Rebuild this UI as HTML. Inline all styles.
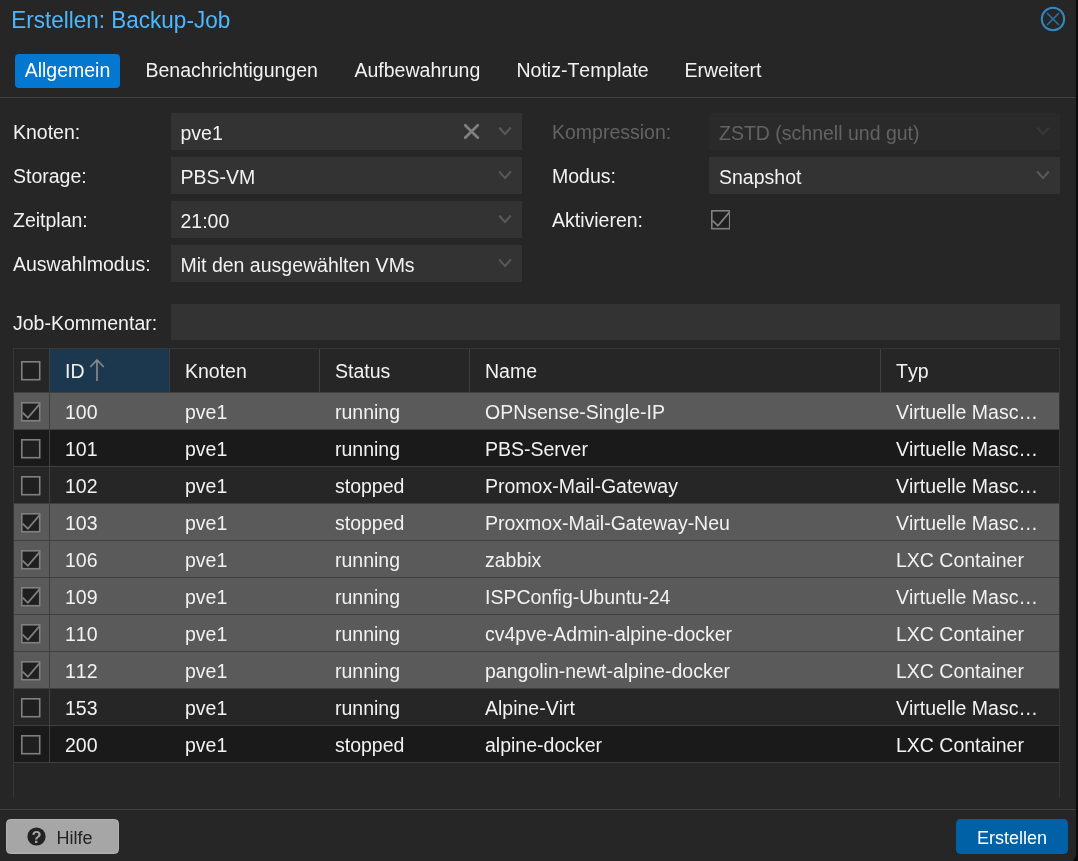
<!DOCTYPE html>
<html lang="de">
<head>
<meta charset="utf-8">
<title>Erstellen: Backup-Job</title>
<style>
*{box-sizing:border-box;margin:0;padding:0}
html,body{width:1078px;height:861px;overflow:hidden;background:#0b0b0b}
body{font-family:"Liberation Sans",Arial,sans-serif;font-size:19.5px;color:#f2f2f2;position:relative;font-kerning:none}
#win{will-change:transform;position:absolute;left:0;top:0;width:1076px;height:863px;background:#262626;border-bottom-right-radius:9px}
.abs{position:absolute;white-space:nowrap}
#title{left:11.3px;top:8.4px;font-size:22.5px;line-height:26px;color:#4db8ff;transform:scaleY(1.08);transform-origin:0 100%}
#close{left:1040px;top:6px;width:26px;height:26px}
.tab{top:54px;height:34px;line-height:32px;font-size:19.5px;color:#f2f2f2}
#tab0{left:15px;width:105px;background:#0477d1;border-radius:4px;text-align:center;color:#fff}
#tabline{left:0;top:97px;width:1075px;height:1px;background:#404040}
.lbl{left:13px;height:36px;line-height:38px}
.fld{background:#333;height:37px;line-height:37px;padding-left:9.5px;padding-top:2px;color:#f2f2f2;overflow:hidden}
.fld.r{padding-left:10px}
.dis{color:#636363}
.chev{position:absolute;right:9.4px;top:12.3px;width:16px;height:12px}
.clr{position:absolute;left:292px;top:10px;width:17px;height:17px}
.cbx{position:absolute;width:19.5px;height:19.5px;display:block}
#grid{left:13px;top:348px;width:1047px;height:449px;border:1px solid #363636;border-bottom:none}
.hd{position:absolute;top:0;height:43px;line-height:45px;border-right:1px solid #404040;padding-left:15px;background:#262626}
.hd.sorted{background:#1c384e}
.hdline{position:absolute;left:0;top:43px;width:1045px;height:1px;background:#404040}
.sort{display:inline-block;width:16px;height:24px;vertical-align:-4px;margin-left:4.5px}
.row{position:absolute;left:0;width:1045px;height:37px;line-height:38px;border-bottom:1px solid #404040}
.row.alt{background:#1a1a1a}
.row.sel{background:#5a5a5a}
.row span{position:absolute;top:0;white-space:nowrap;overflow:hidden;text-overflow:ellipsis}
.row .c0{left:0;width:36px;height:36px;border-right:1px solid #404040}
.c1{left:51px}.c2{left:171px}.c3{left:321px}.c4{left:471px}.c5{left:882px;width:148px}
#botline{left:0;top:809px;width:1075px;height:1px;background:#404040}
.btn{top:819px;height:35px;font-size:18px;line-height:38px;border-radius:4.5px;text-align:center}
#help{left:6px;width:113px;background:#a6a6a6;color:#222;border:1px solid #b2b2b2;line-height:36px;text-align:left;padding-left:49.5px}
#help svg{position:absolute;left:20.4px;top:7.1px;width:19px;height:19px}
#create{left:956px;width:112px;background:#0061a7;color:#fff}
</style>
</head>
<body>
<div id="win">
<div id="title" class="abs">Erstellen: Backup-Job</div>
<svg id="close" class="abs" viewBox="0 0 26 26"><circle cx="13" cy="13" r="11.2" fill="none" stroke="#3687bf" stroke-width="2"/><path d="M7 7L19 19M19 7L7 19" stroke="#2b6ea2" stroke-width="1.7" fill="none"/></svg>

<div id="tab0" class="abs tab">Allgemein</div>
<div class="abs tab" style="left:145.5px">Benachrichtigungen</div>
<div class="abs tab" style="left:354.5px">Aufbewahrung</div>
<div class="abs tab" style="left:516.5px">Notiz-Template</div>
<div class="abs tab" style="left:684.5px">Erweitert</div>
<div id="tabline" class="abs"></div>

<div class="abs lbl" style="top:113px">Knoten:</div>
<div class="abs fld" style="left:171px;top:113px;width:351px">pve1<svg class="clr" viewBox="0 0 17 17"><path d="M2.2 2.2L14.8 14.8M14.8 2.2L2.2 14.8" fill="none" stroke="#808080" stroke-width="2.7" stroke-linecap="round"/></svg><svg class="chev" viewBox="0 0 16 12"><path d="M2.2 2.5L8 9.1L13.8 2.5" fill="none" stroke="#5a5a5a" stroke-width="2"/></svg></div>
<div class="abs lbl" style="top:157px">Storage:</div>
<div class="abs fld" style="left:171px;top:157px;width:351px">PBS-VM<svg class="chev" viewBox="0 0 16 12"><path d="M2.2 2.5L8 9.1L13.8 2.5" fill="none" stroke="#5a5a5a" stroke-width="2"/></svg></div>
<div class="abs lbl" style="top:201px">Zeitplan:</div>
<div class="abs fld" style="left:171px;top:201px;width:351px">21:00<svg class="chev" viewBox="0 0 16 12"><path d="M2.2 2.5L8 9.1L13.8 2.5" fill="none" stroke="#5a5a5a" stroke-width="2"/></svg></div>
<div class="abs lbl" style="top:245px">Auswahlmodus:</div>
<div class="abs fld" style="left:171px;top:245px;width:351px">Mit den ausgewählten VMs<svg class="chev" viewBox="0 0 16 12"><path d="M2.2 2.5L8 9.1L13.8 2.5" fill="none" stroke="#5a5a5a" stroke-width="2"/></svg></div>

<div class="abs lbl dis" style="left:552px;top:113px">Kompression:</div>
<div class="abs fld r dis" style="left:709px;top:113px;width:351px;background:#2a2a2a">ZSTD (schnell und gut)<svg class="chev" viewBox="0 0 16 12"><path d="M2.2 2.5L8 9.1L13.8 2.5" fill="none" stroke="#383838" stroke-width="2"/></svg></div>
<div class="abs lbl" style="left:552px;top:157px">Modus:</div>
<div class="abs fld r" style="left:709px;top:157px;width:351px">Snapshot<svg class="chev" viewBox="0 0 16 12"><path d="M2.2 2.5L8 9.1L13.8 2.5" fill="none" stroke="#5a5a5a" stroke-width="2"/></svg></div>
<div class="abs lbl" style="left:552px;top:201px">Aktivieren:</div>
<svg class="cbx" style="left:710.5px;top:210px" viewBox="0 0 19.5 19.5"><rect x="0.8" y="0.8" width="17.9" height="17.9" fill="#1f1f1f" stroke="#808080" stroke-width="1.6"/><path d="M1.6 10.6L6.9 15.8L18.8 1.9" fill="none" stroke="#808080" stroke-width="1.8"/></svg>

<div class="abs lbl" style="top:304px">Job-Kommentar:</div>
<div class="abs fld" style="left:171px;top:304px;width:889px;height:36px"></div>

<div id="grid" class="abs">
<div class="hd" style="left:0;width:36px;padding:0"><svg class="cbx" style="left:7.2px;top:12.3px" viewBox="0 0 19.5 19.5"><rect x="0.8" y="0.8" width="17.9" height="17.9" fill="#1f1f1f" stroke="#808080" stroke-width="1.6"/></svg></div>
<div class="hd sorted" style="left:36px;width:120px">ID<svg class="sort" viewBox="0 0 16 24"><path d="M8 1.6V23M1.2 9L8 2L14.8 9" fill="none" stroke="#888" stroke-width="1.7"/></svg></div>
<div class="hd" style="left:156px;width:150px">Knoten</div>
<div class="hd" style="left:306px;width:150px">Status</div>
<div class="hd" style="left:456px;width:411px">Name</div>
<div class="hd" style="left:867px;width:178px;border-right:none">Typ</div>
<div class="hdline"></div>
<div class="row sel" style="top:44px"><span class="c0"><svg class="cbx" style="left:7.2px;top:9.4px" viewBox="0 0 19.5 19.5"><rect x="0.8" y="0.8" width="17.9" height="17.9" fill="#1f1f1f" stroke="#808080" stroke-width="1.6"/><path d="M1.6 10.6L6.9 15.8L18.8 1.9" fill="none" stroke="#808080" stroke-width="1.8"/></svg></span><span class="c1">100</span><span class="c2">pve1</span><span class="c3">running</span><span class="c4">OPNsense-Single-IP</span><span class="c5">Virtuelle Maschine</span></div>
<div class="row alt" style="top:81px"><span class="c0"><svg class="cbx" style="left:7.2px;top:9.4px" viewBox="0 0 19.5 19.5"><rect x="0.8" y="0.8" width="17.9" height="17.9" fill="#1f1f1f" stroke="#808080" stroke-width="1.6"/></svg></span><span class="c1">101</span><span class="c2">pve1</span><span class="c3">running</span><span class="c4">PBS-Server</span><span class="c5">Virtuelle Maschine</span></div>
<div class="row" style="top:118px"><span class="c0"><svg class="cbx" style="left:7.2px;top:9.4px" viewBox="0 0 19.5 19.5"><rect x="0.8" y="0.8" width="17.9" height="17.9" fill="#1f1f1f" stroke="#808080" stroke-width="1.6"/></svg></span><span class="c1">102</span><span class="c2">pve1</span><span class="c3">stopped</span><span class="c4">Promox-Mail-Gateway</span><span class="c5">Virtuelle Maschine</span></div>
<div class="row sel" style="top:155px"><span class="c0"><svg class="cbx" style="left:7.2px;top:9.4px" viewBox="0 0 19.5 19.5"><rect x="0.8" y="0.8" width="17.9" height="17.9" fill="#1f1f1f" stroke="#808080" stroke-width="1.6"/><path d="M1.6 10.6L6.9 15.8L18.8 1.9" fill="none" stroke="#808080" stroke-width="1.8"/></svg></span><span class="c1">103</span><span class="c2">pve1</span><span class="c3">stopped</span><span class="c4">Proxmox-Mail-Gateway-Neu</span><span class="c5">Virtuelle Maschine</span></div>
<div class="row sel" style="top:192px"><span class="c0"><svg class="cbx" style="left:7.2px;top:9.4px" viewBox="0 0 19.5 19.5"><rect x="0.8" y="0.8" width="17.9" height="17.9" fill="#1f1f1f" stroke="#808080" stroke-width="1.6"/><path d="M1.6 10.6L6.9 15.8L18.8 1.9" fill="none" stroke="#808080" stroke-width="1.8"/></svg></span><span class="c1">106</span><span class="c2">pve1</span><span class="c3">running</span><span class="c4">zabbix</span><span class="c5">LXC Container</span></div>
<div class="row sel" style="top:229px"><span class="c0"><svg class="cbx" style="left:7.2px;top:9.4px" viewBox="0 0 19.5 19.5"><rect x="0.8" y="0.8" width="17.9" height="17.9" fill="#1f1f1f" stroke="#808080" stroke-width="1.6"/><path d="M1.6 10.6L6.9 15.8L18.8 1.9" fill="none" stroke="#808080" stroke-width="1.8"/></svg></span><span class="c1">109</span><span class="c2">pve1</span><span class="c3">running</span><span class="c4">ISPConfig-Ubuntu-24</span><span class="c5">Virtuelle Maschine</span></div>
<div class="row sel" style="top:266px"><span class="c0"><svg class="cbx" style="left:7.2px;top:9.4px" viewBox="0 0 19.5 19.5"><rect x="0.8" y="0.8" width="17.9" height="17.9" fill="#1f1f1f" stroke="#808080" stroke-width="1.6"/><path d="M1.6 10.6L6.9 15.8L18.8 1.9" fill="none" stroke="#808080" stroke-width="1.8"/></svg></span><span class="c1">110</span><span class="c2">pve1</span><span class="c3">running</span><span class="c4">cv4pve-Admin-alpine-docker</span><span class="c5">LXC Container</span></div>
<div class="row sel" style="top:303px"><span class="c0"><svg class="cbx" style="left:7.2px;top:9.4px" viewBox="0 0 19.5 19.5"><rect x="0.8" y="0.8" width="17.9" height="17.9" fill="#1f1f1f" stroke="#808080" stroke-width="1.6"/><path d="M1.6 10.6L6.9 15.8L18.8 1.9" fill="none" stroke="#808080" stroke-width="1.8"/></svg></span><span class="c1">112</span><span class="c2">pve1</span><span class="c3">running</span><span class="c4">pangolin-newt-alpine-docker</span><span class="c5">LXC Container</span></div>
<div class="row" style="top:340px"><span class="c0"><svg class="cbx" style="left:7.2px;top:9.4px" viewBox="0 0 19.5 19.5"><rect x="0.8" y="0.8" width="17.9" height="17.9" fill="#1f1f1f" stroke="#808080" stroke-width="1.6"/></svg></span><span class="c1">153</span><span class="c2">pve1</span><span class="c3">running</span><span class="c4">Alpine-Virt</span><span class="c5">Virtuelle Maschine</span></div>
<div class="row alt" style="top:377px"><span class="c0"><svg class="cbx" style="left:7.2px;top:9.4px" viewBox="0 0 19.5 19.5"><rect x="0.8" y="0.8" width="17.9" height="17.9" fill="#1f1f1f" stroke="#808080" stroke-width="1.6"/></svg></span><span class="c1">200</span><span class="c2">pve1</span><span class="c3">stopped</span><span class="c4">alpine-docker</span><span class="c5">LXC Container</span></div>
</div>

<div id="botline" class="abs"></div>
<div id="help" class="abs btn"><svg viewBox="0 0 19 19"><circle cx="9.5" cy="9.5" r="9.1" fill="#222"/><text x="9.5" y="15.5" text-anchor="middle" font-family="Liberation Sans, sans-serif" font-weight="bold" font-size="16.5" fill="#a6a6a6">?</text></svg>Hilfe</div>
<div id="create" class="abs btn">Erstellen</div>
</div>
</body>
</html>
